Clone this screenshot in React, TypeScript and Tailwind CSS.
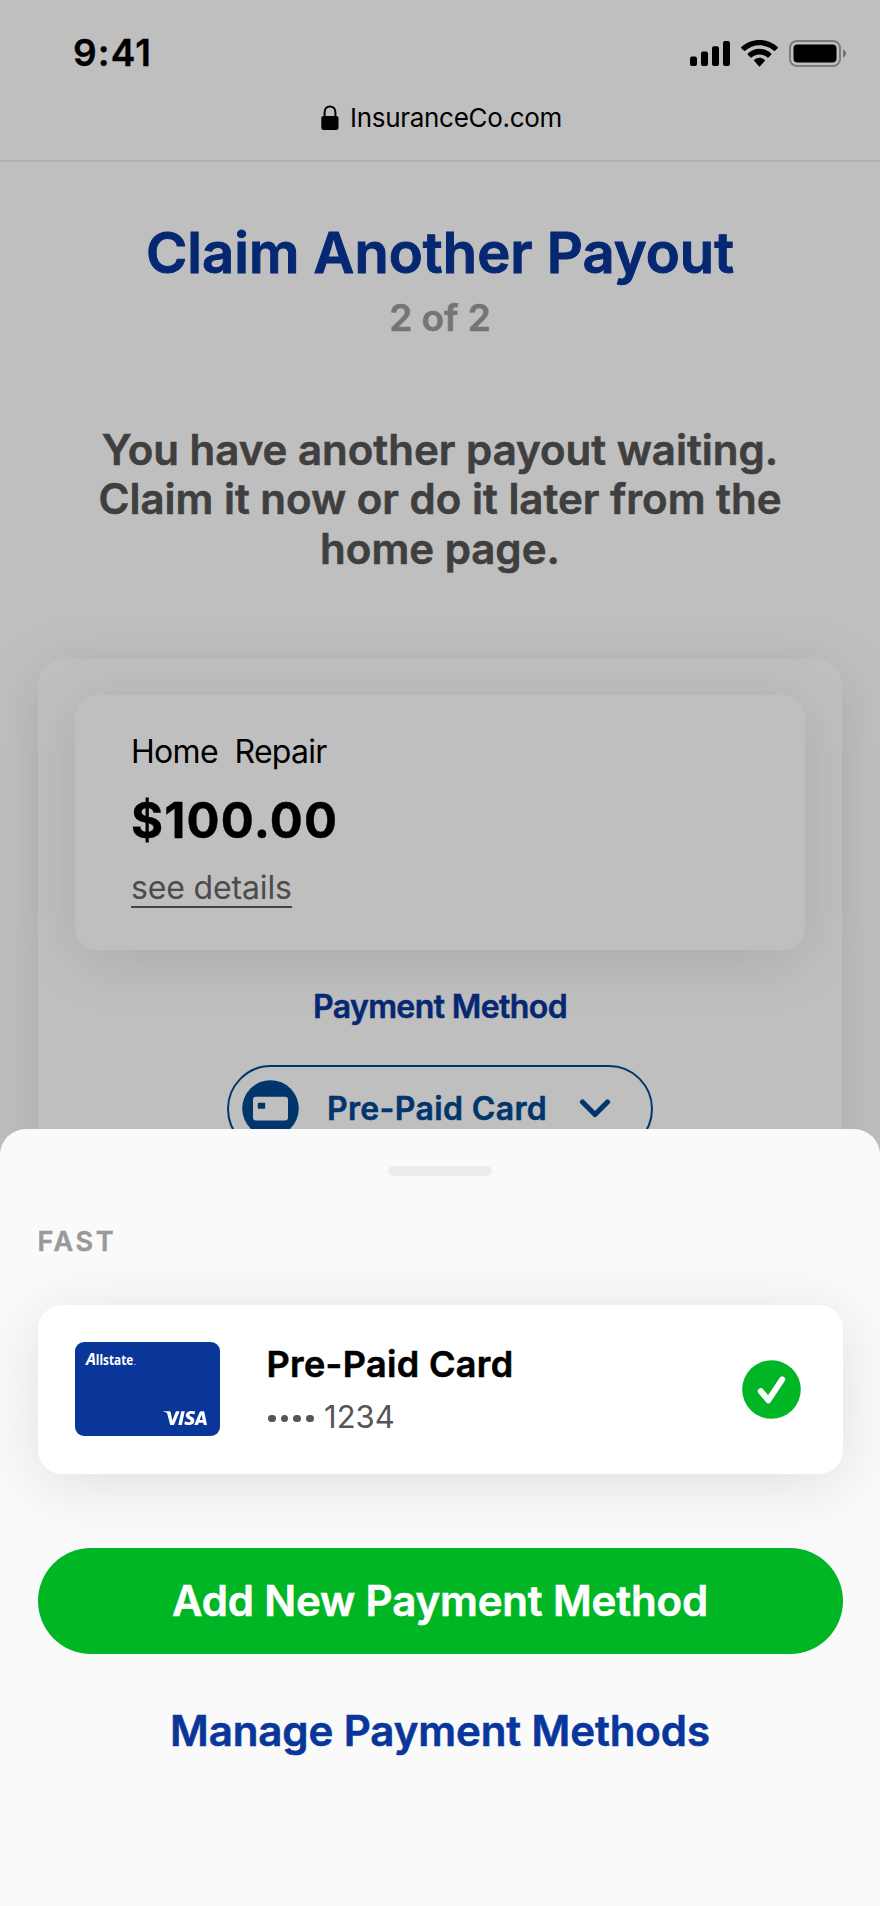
import React from "react";
import { SiVisa } from "react-icons/si";

function StatusIcons() {
  return (
    <div className="flex items-center">
      <svg width="40" height="25" viewBox="0 0 40 25" fill="black" className="mr-[11px]">
        <rect x="0" y="15.5" width="7" height="9.5" rx="2" />
        <rect x="11" y="10.5" width="7" height="14.5" rx="2" />
        <rect x="22" y="5.3" width="7" height="19.7" rx="2" />
        <rect x="33" y="0" width="7" height="25" rx="2" />
      </svg>
      <svg width="37" height="26.6" viewBox="0 0 17.142 12.33" fill="black" className="mr-[11px]">
        <path d="M8.5713 2.46628C11.0584 2.46639 13.4504 3.38847 15.2529 5.04195C15.3887 5.1696 15.6056 5.16799 15.7393 5.03834L17.0368 3.77487C17.1045 3.70911 17.1422 3.62004 17.1417 3.52735C17.1411 3.43467 17.1023 3.34603 17.0338 3.28104C12.3028 -1.09368 4.83907 -1.09368 0.108056 3.28104C0.039524 3.34598 0.000639 3.4346 0 3.52728C-0.000624 3.61996 0.0370483 3.70906 0.104689 3.77487L1.40255 5.03834C1.53615 5.16819 1.75327 5.1698 1.88893 5.04195C3.69167 3.38836 6.08395 2.46628 8.57131 2.46628Z" />
        <path d="M8.56795 6.68656C9.92527 6.68647 11.2341 7.19821 12.2403 8.12234C12.3763 8.2535 12.5907 8.25065 12.7234 8.11594L14.0106 6.79662C14.0784 6.72729 14.116 6.63346 14.115 6.53615C14.114 6.43883 14.0746 6.34579 14.0054 6.27787C10.9416 3.38654 6.19688 3.38654 3.13305 6.27787C3.06384 6.34579 3.02435 6.43888 3.02345 6.53622C3.02254 6.63356 3.06028 6.72735 3.12822 6.79662L4.41513 8.11594C4.54778 8.25065 4.76215 8.2535 4.89823 8.12234C5.90368 7.19882 7.21152 6.68713 8.56795 6.68656Z" />
        <path d="M11.0924 9.48011C11.0943 9.58546 11.0572 9.68703 10.9899 9.76084L8.81327 12.2156C8.74946 12.2877 8.66247 12.3283 8.5717 12.3283C8.48093 12.3283 8.39394 12.2877 8.33013 12.2156L6.15314 9.76084C6.08584 9.68697 6.04884 9.58536 6.05089 9.48001C6.05294 9.37466 6.09384 9.27487 6.16394 9.20419C7.55382 7.89068 9.58959 7.89068 10.9795 9.20419C11.0495 9.27493 11.0904 9.37476 11.0924 9.48011Z" />
      </svg>
      <svg width="57" height="27" viewBox="0 0 57 27" fill="black">
        <rect x="1" y="1" width="50" height="25" rx="7" fill="none" stroke="black" strokeWidth="2" opacity="0.35" />
        <rect x="4.5" y="4.5" width="43" height="18" rx="4" />
        <path d="M54 9.3C55.7 10 57 11.6 57 13.5S55.7 17 54 17.7Z" opacity="0.4" />
      </svg>
    </div>
  );
}

function LockIcon() {
  return (
    <svg width="18" height="26" viewBox="0 0 18 26">
      <path d="M3.6 12V7.2C3.6 3.6 5.9 1.4 9 1.4S14.4 3.6 14.4 7.2V12" fill="none" stroke="black" strokeWidth="2" />
      <rect x="0.3" y="11" width="17.2" height="14" rx="2.2" fill="black" />
    </svg>
  );
}

function PrepaidCardArt() {
  return (
    <div className="flex h-[94px] w-[145px] flex-col justify-between rounded-[9px] bg-[#0a3699] pt-[3px] pr-[13px] pb-[11px] pl-[6px] text-white">
      <svg width="64" height="30" viewBox="0 0 64 30" fill="white" className="font-['Open_Sans',sans-serif] font-bold">
        <text x="5" y="20" fontSize="15.5" fontStyle="italic" textLength="10" lengthAdjust="spacingAndGlyphs">A</text>
        <text x="14.8" y="20" fontSize="15" textLength="37.5" lengthAdjust="spacingAndGlyphs">llstate</text>
        <circle cx="54" cy="19.4" r="0.7" opacity="0.7" />
      </svg>
      <div className="flex h-[15px] items-center justify-end">
        <SiVisa size={44} className="shrink-0" />
      </div>
    </div>
  );
}

function PayoutPage() {
  return (
    <div className="flex flex-col">
      <header className="h-[162px] border-b-2 border-[#eeeeee]">
        <div className="flex h-[105px] items-center justify-between pr-[34px] pl-[73px]">
          <span className="text-[37px] leading-10 font-semibold tracking-[1.1px] [-webkit-text-stroke:0.4px]">9:41</span>
          <div className="pt-[2px]">
            <StatusIcons />
          </div>
        </div>
        <div className="flex h-[26px] items-center justify-center gap-[11px] pl-[3px]">
          <LockIcon />
          <span className="text-[26px] leading-[26px] tracking-[-0.3px]">InsuranceCo.com</span>
        </div>
      </header>

      <main className="flex flex-col items-center pt-[59px]">
        <h1 className="text-[56px] leading-[64px] font-semibold tracking-[0.05px] text-[#083699] [-webkit-text-stroke:1px]">
          Claim Another Payout
        </h1>
        <p className="mt-[12.5px] text-[37px] leading-10 font-semibold text-[#9c9c9c] [-webkit-text-stroke:0.5px]">2 of 2</p>
        <p className="mt-[87.5px] text-center text-[42px] leading-[49.33px] font-semibold text-[#555555] [-webkit-text-stroke:0.6px]">
          You have another payout waiting.
          <br />
          Claim it now or do it later from the
          <br />
          home page.
        </p>

        <section className="mt-[86px] flex h-[700px] w-[804px] flex-col items-center rounded-[25px] bg-white pt-9 shadow-[0_10px_64px_rgba(0,0,0,0.11)]">
          <div className="flex h-[255px] w-[730px] flex-col items-start rounded-[23px] bg-white pt-[37px] pl-[56px] shadow-[0_10px_64px_rgba(0,0,0,0.11)]">
            <span className="text-[32px] leading-10 tracking-[-0.7px] whitespace-pre">Home  Repair</span>
            <span className="mt-[21.5px] text-[49px] leading-[56px] font-bold tracking-[1.2px] [-webkit-text-stroke:0.4px]">$100.00</span>
            <a className="mt-[21px] border-b-2 border-[#5c5c5c] text-[32px] leading-9 tracking-[-0.15px] text-[#666666]">see details</a>
          </div>
          <h2 className="mt-[37px] text-[32px] leading-10 font-semibold tracking-[-0.6px] text-[#083699] [-webkit-text-stroke:0.5px]">
            Payment Method
          </h2>
          <button className="mt-[38px] flex h-[88px] w-[426px] shrink-0 items-center rounded-full border-2 border-[#00488f] pl-[13px] text-[#00488f]">
            <svg width="57" height="57" viewBox="0 0 57 57">
              <circle cx="28.5" cy="28.5" r="28.3" fill="#00488f" />
              <rect x="11" y="16.8" width="35" height="23.6" rx="3" fill="white" />
              <rect x="15.8" y="22.8" width="7.4" height="6" rx="1" fill="#00488f" />
            </svg>
            <span className="ml-[28px] text-[32px] leading-10 font-semibold tracking-[0.35px] [-webkit-text-stroke:0.5px]">Pre-Paid Card</span>
            <svg width="32" height="22" viewBox="0 0 32 22" className="ml-[32px]">
              <path d="M3.5 4L16 16.5L28.5 4" fill="none" stroke="#00488f" strokeWidth="5.2" strokeLinecap="round" strokeLinejoin="round" />
            </svg>
          </button>
        </section>
      </main>
    </div>
  );
}

function PaymentSheet() {
  return (
    <div className="absolute inset-x-0 bottom-0 flex h-[777px] flex-col overflow-hidden rounded-t-[26px] bg-[#fafafa] px-[37.5px] pt-[37px]">
      <div className="h-[10px] w-[104px] shrink-0 self-center rounded-full bg-[#ededed]" />
      <h3 className="mt-[47.5px] text-[27px] leading-9 font-semibold tracking-[2.6px] text-[#999999] [-webkit-text-stroke:0.5px]">FAST</h3>

      <div className="mt-[45px] flex h-[169px] shrink-0 items-center rounded-[24px] bg-white pr-[42px] pl-[37.5px] shadow-[0_10px_64px_rgba(0,0,0,0.11)]">
        <PrepaidCardArt />
        <div className="ml-[46.5px] flex flex-col">
          <span className="text-[36px] leading-[44px] font-semibold tracking-[0.35px] [-webkit-text-stroke:0.6px]">Pre-Paid Card</span>
          <div className="mt-[15px] mb-[3px] flex items-center text-[31px] leading-8 text-[#555555]">
            <span className="ml-[1.5px] flex gap-[5.2px] pt-[3px]">
              <i className="size-[7.5px] rounded-full bg-[#555555]" />
              <i className="size-[7.5px] rounded-full bg-[#555555]" />
              <i className="size-[7.5px] rounded-full bg-[#555555]" />
              <i className="size-[7.5px] rounded-full bg-[#555555]" />
            </span>
            <span className="ml-[10.5px]">1234</span>
          </div>
        </div>
        <svg width="59" height="59" viewBox="0 0 59 59" className="ml-auto">
          <circle cx="29.5" cy="29.5" r="29.3" fill="#00b624" />
          <path d="M18.8 31.2L26.4 40.2L40.2 19.4" fill="none" stroke="white" strokeWidth="6" strokeLinecap="round" strokeLinejoin="round" />
        </svg>
      </div>

      <button className="z-10 mt-[74.5px] h-[105.5px] shrink-0 rounded-full bg-[#00b624] text-[42px] leading-[48px] font-semibold tracking-[-0.15px] text-white [-webkit-text-stroke:0.6px]">
        Add New Payment Method
      </button>
      <button className="mt-[52.5px] text-[42px] leading-[50px] font-semibold tracking-[-0.1px] text-[#08369a] [-webkit-text-stroke:0.6px]">
        Manage Payment Methods
      </button>
    </div>
  );
}

export default function App() {
  return (
    <div className="relative h-[1906px] w-[880px] overflow-hidden bg-white font-['Inter',sans-serif] text-black">
      <PayoutPage />
      <div className="absolute inset-0 bg-black/25" />
      <PaymentSheet />
    </div>
  );
}
